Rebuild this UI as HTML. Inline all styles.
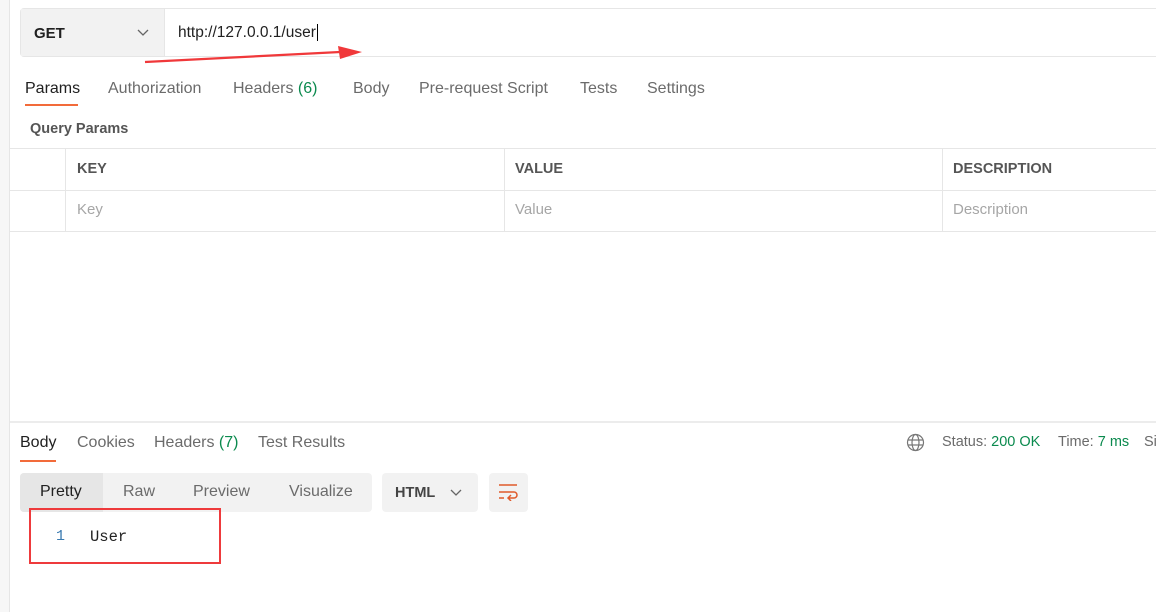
<!DOCTYPE html>
<html><head><style>
body{margin:0;width:1156px;height:612px;overflow:hidden;background:#fff;font-family:"Liberation Sans",sans-serif;position:relative;color:#212121}
.a{position:absolute;white-space:nowrap}
.t{font-size:16px;color:#6b6b6b}
.g{color:#0b8a4e}
</style></head><body>
<div class="a" style="left:0;top:0;width:9px;height:612px;background:#f7f7f7;border-right:1px solid #e6e6e6"></div>
<div class="a" style="left:20px;top:8px;width:1150px;height:49px;border:1px solid #e6e6e6;border-radius:4px;box-sizing:border-box"></div>
<div class="a" style="left:21px;top:9px;width:143px;height:47px;background:#f2f2f2;border-right:1px solid #e6e6e6"></div>
<div class="a" style="left:34px;top:25px;font-size:15px;font-weight:bold">GET</div>
<svg class="a" style="left:137px;top:29px" width="12" height="8"><path d="M1 1l5 5 5-5" stroke="#666" fill="none" stroke-width="1.3"/></svg>
<div class="a" style="left:178px;top:24px;font-size:15.5px">http://127.0.0.1/user<span style="border-left:1px solid #000;margin-left:1px"></span></div>
<svg class="a" style="left:140px;top:44px" width="230" height="24"><path d="M5 18L200 8" stroke="#f0383a" stroke-width="2.2"/><path d="M198 2L222 8 200 15z" fill="#f0383a"/></svg>
<div class="a t" style="left:25px;top:80px;color:#212121">Params</div>
<div class="a" style="left:25px;top:104px;width:53px;height:2px;background:#f26b3a"></div>
<div class="a t" style="left:108px;top:80px">Authorization</div>
<div class="a t" style="left:233px;top:80px">Headers <span class="g">(6)</span></div>
<div class="a t" style="left:353px;top:80px">Body</div>
<div class="a t" style="left:419px;top:80px">Pre-request Script</div>
<div class="a t" style="left:580px;top:80px">Tests</div>
<div class="a t" style="left:647px;top:80px">Settings</div>
<div class="a" style="left:30px;top:121px;font-size:14.5px;font-weight:bold;color:#555">Query Params</div>
<div class="a" style="left:10px;top:148px;width:1146px;height:1px;background:#e6e6e6"></div>
<div class="a" style="left:10px;top:190px;width:1146px;height:1px;background:#e6e6e6"></div>
<div class="a" style="left:10px;top:231px;width:1146px;height:1px;background:#e6e6e6"></div>
<div class="a" style="left:65px;top:148px;width:1px;height:83px;background:#e6e6e6"></div>
<div class="a" style="left:504px;top:148px;width:1px;height:83px;background:#e6e6e6"></div>
<div class="a" style="left:942px;top:148px;width:1px;height:83px;background:#e6e6e6"></div>
<div class="a" style="left:77px;top:161px;font-size:14.5px;font-weight:bold;color:#555">KEY</div>
<div class="a" style="left:515px;top:161px;font-size:14.5px;font-weight:bold;color:#555">VALUE</div>
<div class="a" style="left:953px;top:161px;font-size:14.5px;font-weight:bold;color:#555">DESCRIPTION</div>
<div class="a" style="left:77px;top:201px;font-size:15px;color:#a6a6a6">Key</div>
<div class="a" style="left:515px;top:201px;font-size:15px;color:#a6a6a6">Value</div>
<div class="a" style="left:953px;top:201px;font-size:15px;color:#a6a6a6">Description</div>
<div class="a" style="left:10px;top:421px;width:1146px;height:2px;background:#ececec"></div>
<div class="a t" style="left:20px;top:434px;color:#212121">Body</div>
<div class="a" style="left:20px;top:460px;width:36px;height:2px;background:#f26b3a"></div>
<div class="a t" style="left:77px;top:434px">Cookies</div>
<div class="a t" style="left:154px;top:434px">Headers <span class="g">(7)</span></div>
<div class="a t" style="left:258px;top:434px">Test Results</div>
<svg class="a" style="left:906px;top:433px" width="19" height="19" fill="none" stroke="#777" stroke-width="1.2"><circle cx="9.5" cy="9.5" r="8"/><ellipse cx="9.5" cy="9.5" rx="3.5" ry="8"/><path d="M2 7h15M2 12h15"/></svg>
<div class="a" style="left:942px;top:434px;font-size:14.5px;color:#6b6b6b">Status: <span class="g">200 OK</span></div>
<div class="a" style="left:1058px;top:434px;font-size:14.5px;color:#6b6b6b">Time: <span class="g">7 ms</span></div>
<div class="a" style="left:1144px;top:434px;font-size:14.5px;color:#6b6b6b">Si</div>
<div class="a" style="left:20px;top:473px;width:352px;height:39px;background:#f2f2f2;border-radius:4px"></div>
<div class="a" style="left:20px;top:473px;width:83px;height:39px;background:#e6e6e6;border-radius:4px 0 0 4px"></div>
<div class="a t" style="left:40px;top:483px;color:#212121">Pretty</div>
<div class="a t" style="left:123px;top:483px">Raw</div>
<div class="a t" style="left:193px;top:483px">Preview</div>
<div class="a t" style="left:289px;top:483px">Visualize</div>
<div class="a" style="left:382px;top:473px;width:96px;height:39px;background:#f2f2f2;border-radius:4px"></div>
<div class="a" style="left:395px;top:485px;font-size:14.5px;font-weight:bold;color:#444">HTML</div>
<svg class="a" style="left:450px;top:489px" width="12" height="8"><path d="M1 1l5 5 5-5" stroke="#666" fill="none" stroke-width="1.3"/></svg>
<div class="a" style="left:489px;top:473px;width:39px;height:39px;background:#f2f2f2;border-radius:4px"></div>
<svg class="a" style="left:498px;top:483px" width="22" height="18" fill="none" stroke="#e05a2b" stroke-width="1.5"><path d="M1 2h18M1 9h15a3 3 0 0 1 0 6h-5M13 12l-3 3 3 3M1 15h5"/></svg>
<div class="a" style="left:29px;top:508px;width:192px;height:56px;border:2px solid #ee3a3c;box-sizing:border-box"></div>
<div class="a" style="left:56px;top:528px;font-family:'Liberation Mono',monospace;font-size:15px;color:#3a7ab0">1</div>
<div class="a" style="left:90px;top:528px;font-family:'Liberation Mono',monospace;font-size:15.5px;color:#212121">User</div>
</body></html>
